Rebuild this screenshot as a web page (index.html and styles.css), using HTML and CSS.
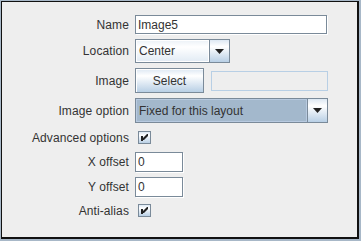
FILE: index.html
```html
<!DOCTYPE html>
<html>
<head>
<meta charset="utf-8">
<link rel="stylesheet" href="styles.css">
</head>
<body>
<div class="window">
  <div class="panel">
    <div class="form">
      <span class="lbl">Name</span>
      <div class="cell"><div class="tf tf-name">Image5</div></div>

      <span class="lbl">Location</span>
      <div class="cell">
        <div class="combo combo-loc">
          <div class="combo-val">Center</div>
          <div class="combo-btn"><svg width="9" height="5" viewBox="0 0 9 5"><path d="M0 0H9L4.5 5Z" fill="#222"/></svg></div>
        </div>
      </div>

      <span class="lbl">Image</span>
      <div class="cell">
        <div class="btn">Select</div>
        <div class="tf tf-disabled"></div>
      </div>

      <span class="lbl">Image option</span>
      <div class="cell">
        <div class="combo combo-opt">
          <div class="combo-val combo-val-sel">Fixed for this layout</div>
          <div class="combo-btn"><svg width="9" height="5" viewBox="0 0 9 5"><path d="M0 0H9L4.5 5Z" fill="#222"/></svg></div>
        </div>
      </div>

      <span class="lbl">Advanced options</span>
      <div class="cell"><div class="cb"><svg width="11" height="11" viewBox="0 0 11 11"><path d="M2 4H4V6L8 2H9V4L5 8H4V9H2Z" fill="#222"/></svg></div></div>

      <span class="lbl">X offset</span>
      <div class="cell"><div class="tf tf-num">0</div></div>

      <span class="lbl">Y offset</span>
      <div class="cell"><div class="tf tf-num">0</div></div>

      <span class="lbl">Anti-alias</span>
      <div class="cell"><div class="cb"><svg width="11" height="11" viewBox="0 0 11 11"><path d="M2 4H4V6L8 2H9V4L5 8H4V9H2Z" fill="#222"/></svg></div></div>
    </div>
  </div>
</div>
</body>
</html>
```

FILE: styles.css
```css
html, body {
  margin: 0;
  padding: 0;
}
body {
  background: #a8b8c8;
  font-family: "Liberation Sans", Arial, sans-serif;
  font-size: 12px;
  color: #333333;
}
.window {
  width: 361px;
  height: 241px;
  box-sizing: border-box;
  border-style: solid;
  border-color: #a8b8c8;
  border-width: 1px 2px 2px 1px;
}
.panel {
  height: 100%;
  box-sizing: border-box;
  border-style: solid;
  border-color: #111111;
  border-width: 1px 2px 2px 1px;
  background: #eeeeee;
}
.form {
  display: grid;
  grid-template-columns: 127px 1fr;
  grid-template-rows: 19px 24px 25px 25px 19px 20px 19px 19px;
  column-gap: 6px;
  row-gap: 5px;
  padding-top: 13px;
}
.lbl {
  display: flex;
  align-items: center;
  justify-content: flex-end;
  white-space: nowrap;
  letter-spacing: 0.1px;
}
.cell {
  display: flex;
  align-items: center;
  gap: 7px;
}
.tf {
  box-sizing: border-box;
  height: 19px;
  border: 1px solid #7a8a99;
  box-shadow: 1px 1px 0 #ffffff;
  background: #ffffff;
  padding: 0 2px;
  display: flex;
  align-items: center;
}
.tf-name {
  width: 192px;
}
.tf-num {
  width: 48px;
  height: 20px;
}
.tf-disabled {
  width: 117px;
  height: 20px;
  border-color: #b8cfe5;
  box-shadow: none;
  background: #eeeeee;
}
.btn {
  box-sizing: border-box;
  width: 69px;
  height: 25px;
  border: 1px solid #7a8a99;
  background: linear-gradient(#dde8f3 0%, #ffffff 30%, #b8cfe5 100%);
  display: flex;
  align-items: center;
  justify-content: center;
  box-shadow: inset 1px 1px 0 #ffffff;
}
.combo {
  box-sizing: border-box;
  display: flex;
  border: 1px solid #7a8a99;
}
.combo-loc {
  width: 95px;
  height: 24px;
}
.combo-opt {
  width: 193px;
  height: 25px;
}
.combo-val {
  flex: 1;
  display: flex;
  align-items: center;
  padding-left: 2px;
  border: 1px solid #ffffff;
  background: linear-gradient(#eef3f8 0%, #ffffff 30%, #e3ecf5 100%);
}
.combo-val-sel {
  background: #a3b8cc;
  border-color: #b8cae0;
}
.combo-btn {
  width: 19px;
  border-left: 1px solid #7a8a99;
  background: linear-gradient(#dde8f3 0%, #ffffff 30%, #b8cfe5 100%);
  display: flex;
  align-items: center;
  justify-content: center;
}
.cb {
  box-sizing: border-box;
  width: 13px;
  height: 13px;
  margin-left: 3px;
  border: 1px solid #7a8a99;
  background: linear-gradient(#dde8f3 0%, #ffffff 30%, #b8cfe5 100%);
  display: flex;
  align-items: center;
  justify-content: center;
}
.cb svg {
  display: block;
}
```
